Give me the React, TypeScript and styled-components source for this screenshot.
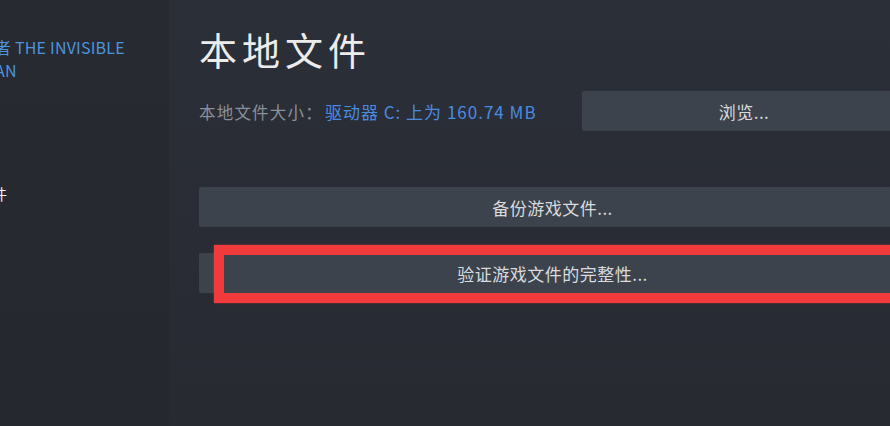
import React from 'react';
import styled, { createGlobalStyle } from 'styled-components';

const GlobalStyle = createGlobalStyle`
  html, body {
    margin: 0;
    padding: 0;
    background: #25282f;
  }
  body {
    font-family: "Noto Sans CJK SC", "Noto Sans", sans-serif;
  }
`;

const Frame = styled.div`
  width: 890px;
  height: 426px;
  overflow: hidden;
  display: flex;
  background: #25282f;
`;

const Sidebar = styled.aside`
  width: 169px;
  flex: none;
  background: linear-gradient(180deg, #272a31 0%, #25282f 100%);
  overflow: hidden;
  padding-top: 36px;
  box-sizing: border-box;
`;

const GameTitle = styled.div`
  margin-left: -5px;
  color: #4d94dc;
  font-size: 16px;
  letter-spacing: 0.2px;
  line-height: 23px;
  white-space: nowrap;
`;

const NavList = styled.ul`
  list-style: none;
  margin: 100px 0 0;
  padding: 0;
`;

const NavItem = styled.li<{ $active?: boolean }>`
  margin-left: -53px;
  color: ${p => (p.$active ? '#f2f2f2' : '#9aa0a8')};
  font-size: 15px;
  line-height: 24px;
  white-space: nowrap;
`;

const Main = styled.main`
  flex: none;
  width: 737px;
  padding: 30px 0 0 30px;
  box-sizing: border-box;
  background: linear-gradient(180deg, #2b2f38 0%, #292c34 60%, #272a31 100%);
  display: flex;
  flex-direction: column;
`;

const Title = styled.h1`
  margin: 0 0 23px 0;
  color: #ececec;
  font-size: 38px;
  line-height: 38px;
  font-weight: 400;
  letter-spacing: 5px;
`;

const SizeRow = styled.div`
  display: flex;
  align-items: center;
  height: 40px;
`;

const SizeLabel = styled.div`
  width: 383px;
  flex: none;
  font-size: 16.5px;
  letter-spacing: 1.2px;
  color: #8a9099;
  white-space: nowrap;
`;

const SizeValue = styled.span`
  color: #4a8be0;
  font-size: 17px;
  letter-spacing: 1px;
  margin-left: 2px;
`;

const Button = styled.button<{ $grow?: boolean }>`
  height: 40px;
  border: none;
  border-radius: 2px;
  background: #3d434d;
  color: #d9dbde;
  font-family: "Noto Sans CJK SC", "Noto Sans", sans-serif;
  font-size: 17px;
  letter-spacing: 0.5px;
  padding: 0;
  cursor: pointer;
  ${p => (p.$grow ? 'flex: 1;' : 'width: 100%;')}
`;

const ActionList = styled.div`
  display: flex;
  flex-direction: column;
  gap: 26px;
  margin-top: 56px;
`;

const Highlighted = styled.div`
  position: relative;
`;

const RedMark = styled.div`
  position: absolute;
  left: 15px;
  top: -8px;
  right: -30px;
  height: 58px;
  border: 10px solid #f03a3c;
  box-sizing: border-box;
  pointer-events: none;
  box-shadow: 0 0 2px rgba(240, 58, 60, 0.6);
`;

export default function App() {
  return (
    <>
      <GlobalStyle />
      <Frame>
        <Sidebar>
          <GameTitle>
            者 THE INVISIBLE
            <br />
            AN
          </GameTitle>
          <NavList>
            <NavItem $active>本地文件</NavItem>
          </NavList>
        </Sidebar>
        <Main>
          <Title>本地文件</Title>
          <SizeRow>
            <SizeLabel>
              本地文件大小：<SizeValue>驱动器 C: 上为 160.74 MB</SizeValue>
            </SizeLabel>
            <Button $grow>浏览...</Button>
          </SizeRow>
          <ActionList>
            <Button>备份游戏文件...</Button>
            <Highlighted>
              <Button>验证游戏文件的完整性...</Button>
              <RedMark />
            </Highlighted>
          </ActionList>
        </Main>
      </Frame>
    </>
  );
}
